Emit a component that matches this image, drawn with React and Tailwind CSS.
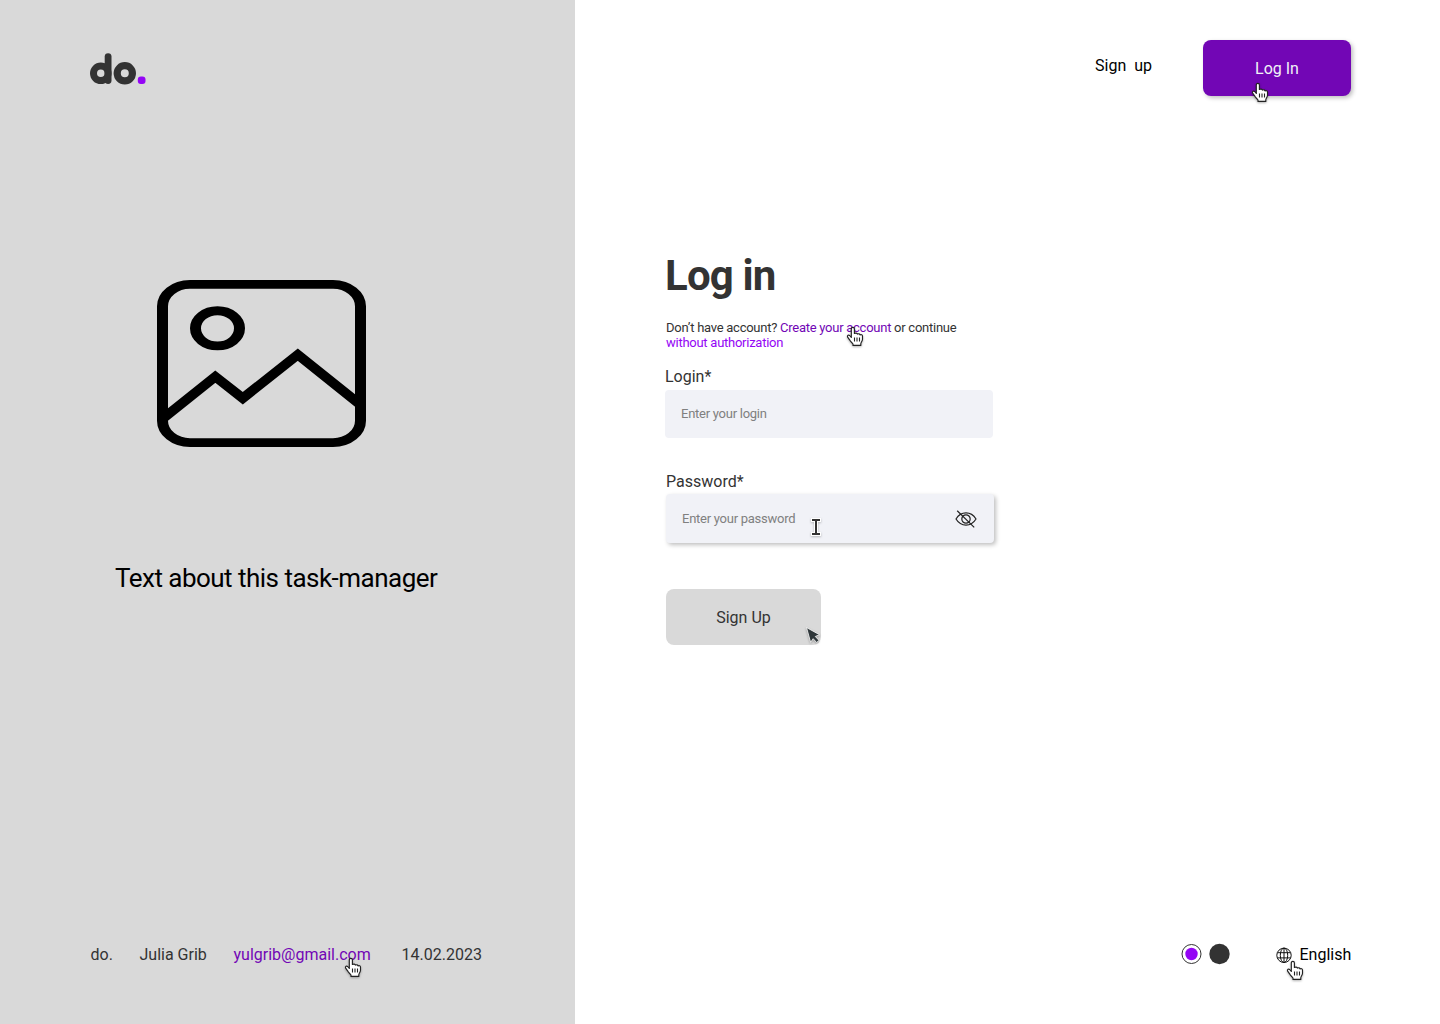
function HandCursor({ className }) {
  return (
    <svg viewBox="0 0 18 21" className={`pointer-events-none absolute h-[21px] w-[18px] drop-shadow-[0_1px_1px_rgba(0,0,0,0.3)] ${className}`}>
      <path d="M5.3 11.5V3C5.3 .8 8.4 .8 8.4 3V7.5C9.6 6.8 11.1 7 11.4 8.1C12.4 7.4 13.8 7.8 14 8.9C15 8.3 16.5 8.8 16.5 10.2V13.2C16.5 15 15 16.2 14.8 17.8V19.4H7V18C6 16.6 4.3 15.6 3.6 13.8L1.5 10.9C1.1 9.3 2.6 8.7 3.6 9.5Z" fill="white" stroke="#222" strokeWidth="1.15" strokeLinejoin="round" />
      <path d="M8.5 11.5v4M11 11.5v4M13.5 11.5v4" stroke="#222" strokeWidth="1.1" />
    </svg>
  );
}

function Logo() {
  return (
    <svg viewBox="0 0 56 32" className="h-8 w-14" aria-label="do." fill="none">
      <circle cx="10.8" cy="20.3" r="7.3" stroke="#333" strokeWidth="7" />
      <path d="M18.1 3.6V27.6" stroke="#333" strokeWidth="6.8" strokeLinecap="round" />
      <circle cx="34.8" cy="20.3" r="7.6" stroke="#333" strokeWidth="7.2" />
      <rect x="47.8" y="23.4" width="7.7" height="7.7" rx="3" fill="#9405F5" />
    </svg>
  );
}

function PictureIcon() {
  return (
    <svg viewBox="0 0 19 19" preserveAspectRatio="none" className="ml-[157px] mt-[195px] h-[167px] w-[209px]" fill="none" stroke="black" strokeWidth="1">
      <rect x="0.5" y="0.5" width="18" height="18" rx="2.5" />
      <circle cx="5.5" cy="5.5" r="2" />
      <path d="M0.5 15.8L5.3 11L7.8 13.45L12.8 8.5L18.5 14.2" />
    </svg>
  );
}

function EyeOff() {
  return (
    <svg viewBox="0 0 22 18" className="relative left-[0.5px] top-[0.5px] h-[18px] w-[22px]" fill="none" stroke="#222" strokeWidth="1.2">
      <path d="M1 9C6 .9 16 .9 21 9C16 17.1 6 17.1 1 9Z" />
      <circle cx="11" cy="9" r="4.2" />
      <path d="M2.2 .7L19.2 17.4" />
    </svg>
  );
}

function Globe() {
  return (
    <svg viewBox="0 0 16 16" className="h-4 w-4" fill="none" stroke="#111" strokeWidth="1">
      <circle cx="8" cy="8.3" r="7.2" />
      <ellipse cx="8" cy="8.3" rx="3.7" ry="7.2" />
      <path d="M8 1V15.5M1.5 5.7H14.5M1.5 10.9H14.5" />
    </svg>
  );
}

export default function App() {
  return (
    <div className="flex h-[1024px] w-[1440px] overflow-hidden bg-white font-['Roboto',sans-serif] text-base leading-[19px] text-[#333]">
      <aside className="flex w-[575px] shrink-0 flex-col bg-[#d9d9d9]">
        <div className="ml-[90px] mt-[53px] h-8"><Logo /></div>
        <PictureIcon />
        <p className="ml-[115px] mt-[116px] whitespace-nowrap text-[26px] leading-[30px] tracking-[-0.52px] text-black">Text about this task-manager</p>
        <footer className="mb-[60px] ml-[90.5px] mt-auto flex whitespace-nowrap">
          <span className="w-[49px]">do.</span>
          <span className="w-[94px]">Julia Grib</span>
          <a className="relative w-[168px] text-[#7206b5]">yulgrib@gmail.com<HandCursor className="left-[110.5px] top-3" /></a>
          <span>14.02.2023</span>
        </footer>
      </aside>
      <main className="flex grow flex-col">
        <nav className="flex h-[96px] items-start pt-10">
          <a className="ml-[520px] mt-4 w-[108px] whitespace-pre text-black">Sign  up</a>
          <button className="relative h-14 w-[148px] rounded-lg bg-[#7206b5] text-[#f1f2f7] shadow-[2px_2px_4px_rgba(0,0,0,0.25)]">
            Log In
            <HandCursor className="left-[48px] top-[42px]" />
          </button>
        </nav>
        <form className="ml-[90px] mt-[155px] flex w-[330px] flex-col">
          <h1 className="text-[42px] font-bold leading-[49px] tracking-[-0.84px]">Log in</h1>
          <p className="relative ml-px mt-5 whitespace-nowrap text-[13px] leading-[15px] tracking-[-0.26px]">
            Don’t have account? <a className="text-[#7206b5]">Create your account</a> or continue<br />
            <a className="text-[#9405f5]">without authorization</a>
            <HandCursor className="left-[180px] top-[6px]" />
          </p>
          <label className="mt-[17px]">Login*</label>
          <div className="mt-1 flex h-12 w-[328px] items-center rounded bg-[#f1f2f7] px-4 pb-0.5 text-[13px] tracking-[-0.26px] text-[#808080]">Enter your login</div>
          <label className="ml-px mt-[34px]">Password*</label>
          <div className="relative ml-px mt-[3px] flex h-[49px] w-[328px] items-center justify-between rounded bg-[#f1f2f7] pl-4 pr-[18px] text-[13px] tracking-[-0.26px] text-[#808080] shadow-[2px_2px_4px_rgba(0,0,0,0.25)]">
            <span>Enter your password</span>
            <EyeOff />
            <svg viewBox="0 0 12 20" className="absolute left-[144px] top-[23px] h-5 w-3 drop-shadow-[0_1px_1px_rgba(0,0,0,0.25)]">
              <path d="M1 3H11M1 17H11M6 3V17" stroke="white" strokeWidth="4" />
              <path d="M2 3H10M2 17H10M6 3V17" stroke="#333" strokeWidth="2" />
            </svg>
          </div>
          <button className="relative ml-px mt-[46px] h-14 w-[155px] rounded-lg bg-[#d9d9d9]">
            Sign Up
            <svg viewBox="0 0 16 18" className="absolute left-[140px] top-[37px] h-[18px] w-4 drop-shadow-[0_1px_1px_rgba(0,0,0,0.3)]">
              <path d="M.5 1.5L13.5 8.7L9.3 10.5L13 14.4L10.6 16.5L7.2 12.7L4.6 16.3Z" fill="#30383b" stroke="white" strokeWidth="0.8" />
            </svg>
          </button>
        </form>
        <footer className="mb-[59.5px] ml-[606px] mt-auto flex h-5 items-center">
          <svg viewBox="0 0 50 22" className="-mt-px h-[22px] w-[50px]">
            <circle cx="10.5" cy="11" r="9.5" fill="white" stroke="#333" />
            <circle cx="10.5" cy="11" r="6.2" fill="#9405f5" />
            <circle cx="38.5" cy="11" r="10.2" fill="#333" />
          </svg>
          <span className="relative ml-[45px] mt-px"><Globe /><HandCursor className="left-[10px] top-[13px]" /></span>
          <span className="-mt-px ml-[7.5px] text-black">English</span>
        </footer>
      </main>
    </div>
  );
}
